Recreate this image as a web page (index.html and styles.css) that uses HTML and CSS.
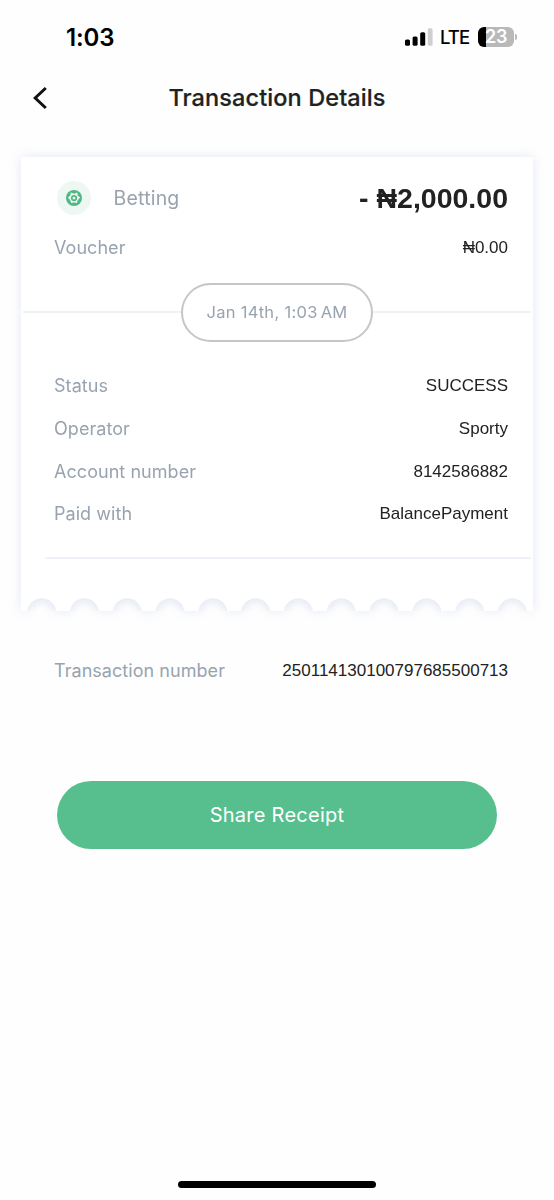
FILE: index.html
```html
<!DOCTYPE html>
<html lang="en">
<head>
<meta charset="utf-8">
<title>Transaction Details</title>
<link rel="stylesheet" href="styles.css">
</head>
<body>
<div class="screen">
  <header class="status-bar">
    <span class="clock">1:03</span>
    <div class="indicators">
      <svg class="signal" viewBox="0 0 28 18" width="28" height="18">
        <rect x="0" y="11.5" width="5" height="6.3" rx="1.6"/>
        <rect x="7.6" y="8.4" width="5" height="9.4" rx="1.6"/>
        <rect x="15.2" y="4.2" width="5" height="13.6" rx="1.6"/>
        <rect x="22.8" y="0.2" width="4.8" height="17.6" rx="1.6" fill="#cfcfcf"/>
      </svg>
      <span class="network">LTE</span>
      <div class="battery"><span class="battery-level">23</span></div>
      <span class="battery-cap"></span>
    </div>
  </header>
  <nav class="title-bar">
    <svg class="back" viewBox="0 0 16 24" width="16" height="24"><path d="M13.8 2 3.2 12l10.6 10" fill="none" stroke="#111" stroke-width="3"/></svg>
    <h1 class="title">Transaction Details</h1>
  </nav>
  <main>
    <section class="receipt">
      <div class="receipt-body">
        <div class="row row-amount">
          <span class="badge">
            <svg viewBox="0 0 18 18" width="18" height="18">
              <circle cx="9" cy="9" r="8" fill="#4fb885"/>
              <path d="M5.8 3.6 9 4.8l3.2-1.2.5 3 2.4 2-2.4 2.7-.8 2.8L9 13.5l-2.9.6-.8-2.8-2.4-2.7 2.4-2z" fill="#edf8f3"/>
              <circle cx="9" cy="9.1" r="2.3" fill="none" stroke="#4fb885" stroke-width="1.7"/>
            </svg>
          </span>
          <span class="label category">Betting</span>
          <span class="amount">- ₦2,000.00</span>
        </div>
        <div class="row row-voucher"><span class="label voucher">Voucher</span><span class="value voucher">₦0.00</span></div>
        <div class="date-divider"><span class="date">Jan 14th, 1:03<span class="meridiem">AM</span></span></div>
        <div class="details">
          <div class="row"><span class="label">Status</span><span class="value">SUCCESS</span></div>
          <div class="row"><span class="label">Operator</span><span class="value">Sporty</span></div>
          <div class="row"><span class="label">Account number</span><span class="value">8142586882</span></div>
          <div class="row"><span class="label">Paid with</span><span class="value">BalancePayment</span></div>
        </div>
        <div class="rule"></div>
      </div>
      <div class="scallops"></div>
    </section>
    <div class="row row-number"><span class="label number">Transaction number</span><span class="value">250114130100797685500713</span></div>
    <button class="share">Share Receipt</button>
  </main>
  <div class="home-indicator"></div>
</div>
</body>
</html>
```
FILE: styles.css
```css
* { box-sizing: border-box; }
body { margin: 0; background: #fefefe; font-family: Inter, "Liberation Sans", sans-serif; }
.screen { width: 554px; height: 1200px; display: flex; flex-direction: column; overflow: hidden; }
.status-bar { height: 74px; padding: 0 37px 0 66px; display: flex; justify-content: space-between; align-items: center; color: #000; }
.clock { font-size: 24px; font-weight: 600; letter-spacing: -0.1px; }
.indicators { display: flex; align-items: center; }
.signal { display: block; }
.network { width: 45px; padding-left: 7px; font-size: 18.5px; font-weight: 500; letter-spacing: -0.9px; }
.battery { width: 36px; height: 20px; border-radius: 6px; background: linear-gradient(90deg, #000 8px, #b9b9b9 8px); text-align: center; }
.battery-level { display: block; font-size: 18px; line-height: 20px; font-weight: 600; color: #fff; letter-spacing: -0.4px; }
.battery-cap { width: 2px; height: 6px; margin-left: 1px; border-radius: 0 2px 2px 0; background: #b9b9b9; }
.title-bar { height: 48px; padding: 0 32px; display: grid; grid-template-columns: 16px 1fr 16px; align-items: center; }
.back { display: block; }
.title { margin: -1px 0 0; text-align: center; font-size: 23.5px; font-weight: 500; letter-spacing: 0.1px; color: #202222; -webkit-text-stroke: 0.2px #202222; }
main { padding: 35px 21px 0; }
.receipt { width: 512px; height: 454px; filter: drop-shadow(0 0 6px rgba(115, 140, 195, 0.2)); }
.receipt-body { height: 441px; background: #fff; border-radius: 2px 2px 0 0; }
.scallops { height: 13px; background: linear-gradient(rgba(150, 165, 195, 0.09), rgba(150, 165, 195, 0)), radial-gradient(circle at 20.6px 15px, transparent 14.2px, #fff 15px) 0 0 / 42.8px 13px; background: radial-gradient(circle at 20.6px 15px, rgba(150, 165, 195, 0) 5px, rgba(150, 165, 195, 0.06) 14.2px, #fff 15px) 0 0 / 42.8px 13px; }
.row { display: flex; justify-content: space-between; align-items: center; padding: 0 25px 0 33px; }
.label { font-size: 18px; letter-spacing: 0.05px; color: #98a3af; white-space: nowrap; }
.value { padding-top: 1px; font-family: "Liberation Sans", Arial, sans-serif; font-size: 17px; color: #222; white-space: nowrap; }
.row-amount { height: 82px; padding-left: 36px; }
.badge { width: 34px; height: 34px; border-radius: 50%; background: #edf8f3; display: flex; align-items: center; justify-content: center; }
.category { margin: 0 auto 0 22.5px; font-size: 19.5px; letter-spacing: 0.2px; }
.amount { font-family: "Liberation Sans", Arial, sans-serif; font-weight: 700; font-size: 28.5px; color: #222; }
.row-voucher { height: 18px; }
.voucher { margin-top: -1px; }
.date-divider { height: 59px; margin: 25.5px 2px 0; display: flex; align-items: center; }
.date-divider::before, .date-divider::after { content: ""; flex: 1; height: 2px; margin-top: -1px; background: #eff3f7; }
.date { width: 192px; height: 59px; border: 2px solid #c6c6c6; border-radius: 30px; display: flex; align-items: center; justify-content: center; padding-bottom: 1px; font-size: 16.5px; letter-spacing: 0.3px; color: #98a3af; }
.meridiem { margin-left: 3px; }
.details { padding-top: 23px; }
.details .row { height: 42.7px; }
.rule { height: 2px; margin: 22px 2px 0 24px; background: #eef1f7; }
.row-number { height: 42px; margin: 38px 0 0; }
.share { display: block; width: 440px; height: 68px; margin: 89.5px auto 0; padding: 0; border: 0; border-radius: 34px; background: #57bf8e; color: #fff; font: 400 20px Inter, sans-serif; letter-spacing: 0.25px; }
.home-indicator { width: 198px; height: 7px; border-radius: 4px; background: #000; margin: auto auto 12px; flex: none; }
```
